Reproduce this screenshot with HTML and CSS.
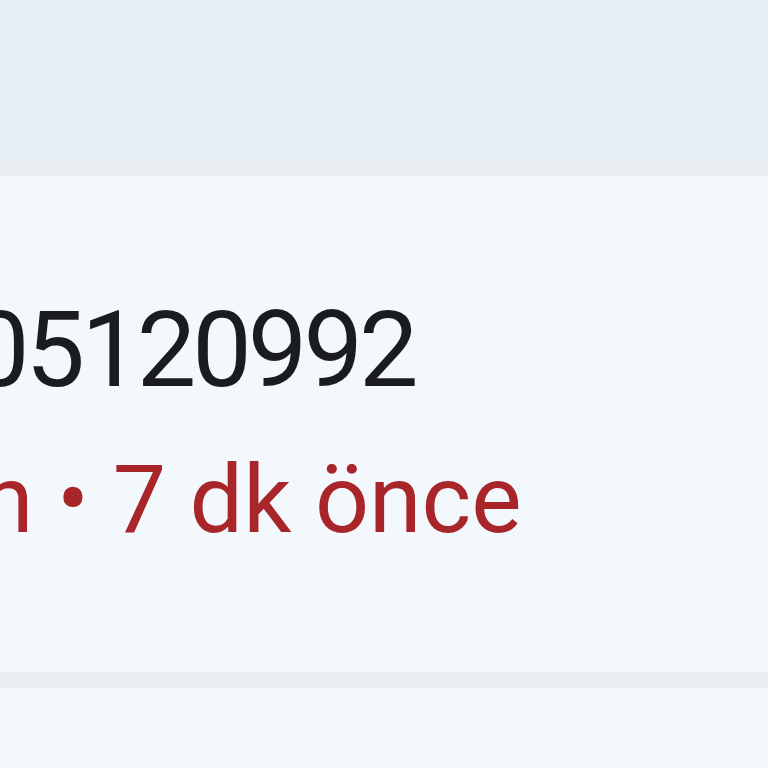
FILE: index.html
```html
<!DOCTYPE html>
<html>
<head>
  <meta charset="utf-8" />
  <meta name="viewport" content="width=device-width, initial-scale=1.0">
  <title>Arama</title>
  <link rel="stylesheet" href="styles.css">
</head>
<body>
  <div class="header"></div>

  <div class="gap"></div>

  <!-- Arama kaydi -->
  <div class="call-item">
    <div class="call-number">05120992</div>
    <div class="call-meta">Kaçırılan • 7 dk önce</div>
  </div>

  <div class="gap small"></div>

  <div class="call-item next"></div>
</body>
</html>
```

FILE: styles.css
```css
/* Grundlayout */
html, body {
  margin: 0;
  padding: 0;
  font-family: Roboto, "Noto Sans", sans-serif;
  background: #f3f8fc;
  overflow: hidden;
}

.header {
  height: 158px;
  background: #e5edf5;
}

.gap {
  height: 18px;
  background: #e8edf1;
}

.gap.small {
  height: 16px;
}

.call-item {
  height: 496px;
  background: #f3f8fc;
  box-sizing: border-box;
  padding-top: 112px;
  overflow: hidden;
  white-space: nowrap;
}

.call-item.next {
  height: 80px;
  padding: 0;
}

.call-number {
  font-size: 106px;
  line-height: 124px;
  letter-spacing: -4px;
  color: #1b1c1f;
  margin-left: -30px;
}

.call-meta {
  margin-top: 35px;
  font-size: 95px;
  line-height: 106px;
  color: #a8262a;
  margin-left: -334px;
}
```
